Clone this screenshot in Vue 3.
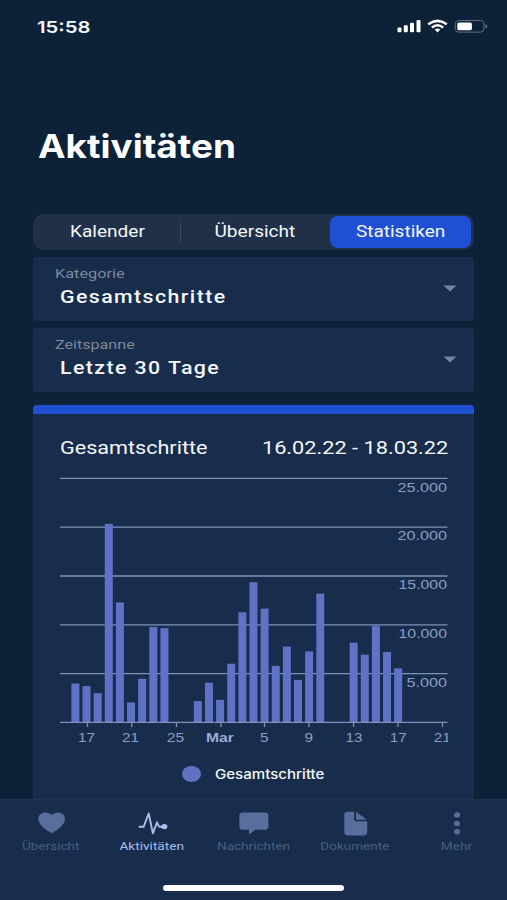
<script setup>
import { ref } from 'vue';

// Stretches a piece of text horizontally to the given width
const vFit = {
  mounted(el, binding) {
    el.style.transform = `scaleX(${binding.value / el.offsetWidth})`;
  }
};

const tabs = [
  { name: 'Kalender', width: 75 },
  { name: 'Übersicht', width: 81 },
  { name: 'Statistiken', width: 89 }
];
const activeTab = ref('Statistiken');

const filters = [
  { label: 'Kategorie', labelWidth: 70, value: 'Gesamtschritte', valueWidth: 167 },
  { label: 'Zeitspanne', labelWidth: 80, value: 'Letzte 30 Tage', valueWidth: 160 }
];

const steps = [
  3950, 3680, 2960, 20300, 12250, 2000, 4430, 9740, 9620, 0, 0,
  2150, 4020, 2270, 5970, 11250, 14320, 11620, 5750, 7730, 4320, 7230, 13150,
  0, 0, 8120, 6900, 9850, 7180, 5500
];

const gridLines = [
  { y: 1.3, text: '25.000', x: 337.5, width: 49.5 },
  { y: 50.2, text: '20.000', x: 337.5, width: 49.5 },
  { y: 99, text: '15.000', x: 338.5, width: 48.5 },
  { y: 147.8, text: '10.000', x: 338.5, width: 48.5 },
  { y: 196.6, text: '5.000', x: 346.5, width: 40.5 }
];

const days = [
  { text: '17', x: 26.5, width: 17 },
  { text: '21', x: 70.5, width: 17 },
  { text: '25', x: 115.5, width: 17.5 },
  { text: 'Mar', x: 160, width: 28, bold: true },
  { text: '5', x: 204.3, width: 8.5 },
  { text: '9', x: 248.8, width: 8.5 },
  { text: '13', x: 294, width: 17 },
  { text: '17', x: 338.2, width: 17 },
  { text: '21', x: 382.3, width: 17 }
];

const ticks = [27.5, 71.8, 116.5, 161, 204.5, 249, 293.5, 338, 382.5];

const barHeight = (value) => value * 0.00976;

const navItems = [
  { name: 'Übersicht', icon: 'heart', width: 58 },
  { name: 'Aktivitäten', icon: 'pulse', width: 64 },
  { name: 'Nachrichten', icon: 'chat', width: 73 },
  { name: 'Dokumente', icon: 'file', width: 69.5 },
  { name: 'Mehr', icon: 'more', width: 31.5 }
];
const activeNav = ref('Aktivitäten');
</script>

<template>
  <div class="app">
    <header class="status">
      <span class="time" v-fit="54">15:58</span>
      <svg class="status-icons" width="92" height="16" viewBox="0 0 92 16">
        <g fill="#fff">
          <rect x="1.5" y="9.5" width="4" height="4.7" rx="1" />
          <rect x="7.8" y="7.3" width="4" height="6.9" rx="1" />
          <rect x="14" y="4.7" width="4" height="9.5" rx="1" />
          <rect x="20.5" y="2" width="4" height="12.2" rx="1" />
        </g>
        <g fill="none" stroke="#fff" stroke-width="2.5">
          <path d="M32.2 6.2 Q41.5 -.5 50.8 6.2" />
          <path d="M35.9 9.5 Q41.5 4.9 47.1 9.5" />
        </g>
        <path d="M38.7 11.6 Q41.5 9.6 44.3 11.6 L41.5 14.4 Z" fill="#fff" />
        <rect x="59.3" y="2.5" width="28.7" height="11.6" rx="3.5" fill="none" stroke="#5f6f84" />
        <rect x="61.3" y="4.4" width="14.6" height="7.8" rx="1.6" fill="#fff" />
        <path d="M89.5 6 Q93 8.2 89.5 10.4 Z" fill="#6b7a8e" />
      </svg>
    </header>

    <main>
      <h1><span v-fit="198">Aktivitäten</span></h1>

      <div class="tabs">
        <button
          v-for="tab in tabs"
          :key="tab.name"
          :class="{ active: tab.name === activeTab }"
          @click="activeTab = tab.name"
        >
          <span v-fit="tab.width">{{ tab.name }}</span>
        </button>
      </div>

      <div v-for="filter in filters" :key="filter.label" class="filter">
        <div class="filter-text">
          <span class="label" v-fit="filter.labelWidth">{{ filter.label }}</span>
          <span class="value" v-fit="filter.valueWidth">{{ filter.value }}</span>
        </div>
        <svg width="14" height="7" viewBox="0 0 14 7">
          <path d="M.5 .5 H13.5 L7 6.5 Z" fill="#7385a0" />
        </svg>
      </div>

      <section class="card">
        <div class="card-head">
          <span v-fit="147.5">Gesamtschritte</span>
          <span class="range" v-fit="186">16.02.22 - 18.03.22</span>
        </div>

        <svg class="chart" width="388" height="274" viewBox="0 0 388 274">
          <line
            v-for="line in gridLines"
            :key="line.y"
            class="grid"
            x1="0"
            x2="387.5"
            :y1="line.y"
            :y2="line.y"
          />
          <template v-for="(value, i) in steps" :key="i">
            <rect
              v-if="value"
              class="bar"
              :x="11.4 + i * 11.13"
              :y="245 - barHeight(value)"
              width="8"
              :height="barHeight(value)"
            />
          </template>
          <line class="grid" x1="0" x2="387.5" y1="245.3" y2="245.3" />
          <line v-for="x in ticks" :key="x" class="grid" :x1="x" :x2="x" y1="245" y2="250" />
          <text
            v-for="line in gridLines"
            :key="line.text"
            :x="line.x"
            :y="line.y + 13.2"
            :textLength="line.width"
            lengthAdjust="spacingAndGlyphs"
          >{{ line.text }}</text>
          <text
            v-for="day in days"
            :key="day.x"
            :class="{ month: day.bold }"
            :x="day.x - day.width / 2"
            y="264.8"
            :textLength="day.width"
            lengthAdjust="spacingAndGlyphs"
          >{{ day.text }}</text>
        </svg>

        <div class="legend">
          <i></i>
          <span v-fit="109">Gesamtschritte</span>
        </div>
      </section>
    </main>

    <footer>
      <nav>
        <a v-for="item in navItems" :key="item.name" :class="{ active: item.name === activeNav }">
          <svg width="32" height="28" viewBox="0 0 32 28" fill="currentColor">
            <path
              v-if="item.icon === 'heart'"
              d="M16.7 25.2 C12 22.3 3.4 17.5 3.4 11 C3.4 4.2 12.3 2.6 16.7 7.1 C21.1 2.6 30 4.2 30 11 C30 17.5 21.4 22.3 16.7 25.2 Z"
            />
            <g v-else-if="item.icon === 'pulse'">
              <path
                d="M3.5 18.7 H7.7 L12.7 5.5 L16.9 25.3 L21 14.3 L23.2 18.7 H28"
                fill="none"
                stroke="currentColor"
                stroke-width="1.9"
                stroke-linejoin="round"
                stroke-linecap="round"
              />
              <ellipse cx="28.3" cy="18.6" rx="3.1" ry="2.6" />
            </g>
            <path
              v-else-if="item.icon === 'chat'"
              d="M6 4.6 H27.8 Q31.4 4.6 31.4 7.8 V18.4 Q31.4 21.8 27.8 21.8 H18.6 L12.7 26 Q12 26.3 12 25.5 V21.8 H6 Q2.4 21.8 2.4 18.4 V7.8 Q2.4 4.6 6 4.6 Z"
            />
            <g v-else-if="item.icon === 'file'">
              <path d="M8.3 3.8 H15.2 V11.3 Q15.2 13.3 17.3 13.3 H28.2 V24.1 Q28.2 27.4 24.9 27.4 H8.6 Q5.3 27.4 5.3 24.1 V7.1 Q5.3 3.8 8.3 3.8 Z" />
              <path d="M17.1 4.3 Q17.8 4.2 18.6 5 L26.6 10.8 Q27 11.3 27 11.8 H18.3 Q17.1 11.8 17.1 10.8 Z" />
            </g>
            <g v-else>
              <ellipse cx="17" cy="7" rx="3" ry="2.7" />
              <ellipse cx="17" cy="15.4" rx="3" ry="2.7" />
              <ellipse cx="17" cy="23.8" rx="3" ry="2.7" />
            </g>
          </svg>
          <span v-fit="item.width">{{ item.name }}</span>
        </a>
      </nav>
      <div class="home-bar"></div>
    </footer>
  </div>
</template>

<style>
body {
  margin: 0;
  background: #0d2139;
}
</style>

<style scoped>
.app {
  display: flex;
  flex-direction: column;
  width: 507px;
  height: 900px;
  overflow: hidden;
  background: #0d2139;
  color: #f4f7fc;
  font-family: Roboto, sans-serif;
}

.app span {
  display: inline-block;
  white-space: nowrap;
  transform-origin: left center;
}

.status {
  display: flex;
  justify-content: space-between;
  align-items: center;
  box-sizing: border-box;
  height: 54px;
  padding: 0 19px 0 37px;
}

.time {
  margin-bottom: 1px;
  font: 600 16.5px/20px Inter, sans-serif;
}

.status-icons {
  margin-bottom: 2px;
}

main {
  flex: 1;
  min-height: 0;
  overflow: hidden;
  padding: 0 33px;
}

h1 {
  margin: 72px 0 47px 5px;
  color: #fff;
  font: 700 33px/41px Inter, sans-serif;
}

.tabs {
  display: grid;
  grid-template-columns: 148px 148px 1fr;
  box-sizing: border-box;
  height: 36px;
  padding: 2px 3px 2px 0;
  margin-bottom: 6.5px;
  border-radius: 10px;
  background: #1f3048;
}

.tabs button {
  padding: 0 0 1px;
  border: 0;
  background: none;
  color: inherit;
  font: 400 16px/20px Roboto, sans-serif;
}

.tabs button:first-child {
  background: linear-gradient(#35455b, #35455b) right center / 1px 21px no-repeat;
}

.tabs button.active {
  margin-left: 1px;
  border-radius: 8px;
  background: #1f4fd3;
}

.filter {
  display: flex;
  justify-content: space-between;
  align-items: center;
  box-sizing: border-box;
  height: 64.5px;
  margin-bottom: 6.5px;
  padding: 0 17px 0 22px;
  border-radius: 4px;
  background: #172d4b;
}

.filter svg {
  margin-bottom: 1px;
}

.filter-text {
  display: flex;
  flex-direction: column;
  align-items: flex-start;
  padding-bottom: 4px;
}

.label {
  color: #7d8899;
  font-size: 13.5px;
  line-height: 20px;
}

.value {
  margin-left: 5px;
  font-size: 18px;
  font-weight: 500;
  line-height: 27px;
  letter-spacing: 1.2px;
}

.card {
  box-sizing: border-box;
  height: 420px;
  margin-top: 13px;
  padding: 20px 26px 0 27px;
  border-top: 9px solid #1f50d3;
  border-radius: 4px;
  background: #172d4b;
}

.card-head {
  display: flex;
  justify-content: space-between;
  height: 43px;
  font-size: 18px;
  line-height: 27px;
}

.app .range {
  transform-origin: right center;
}

.app .tabs span,
.app nav span {
  transform-origin: center;
}

.chart {
  display: block;
}

.grid {
  stroke: #7f92b7;
  stroke-width: 1.3;
}

.bar {
  fill: #5f72c6;
}

.chart text {
  fill: #8c9dc5;
  font: 13.5px "Liberation Sans", sans-serif;
}

.chart .month {
  fill: #9aabdc;
  font-weight: 700;
}

.legend {
  display: flex;
  align-items: center;
  gap: 14px;
  height: 20px;
  padding: 13px 0 0 122px;
  font: 500 13px/20px Inter, sans-serif;
}

.legend i {
  width: 19px;
  height: 16px;
  border-radius: 50%;
  background: #5f72c6;
}

footer {
  box-sizing: border-box;
  height: 101px;
  border-top: 1px solid #1d3455;
  background: #172d4b;
}

nav {
  display: grid;
  grid-template-columns: repeat(5, 1fr);
  height: 85px;
}

nav a {
  display: flex;
  flex-direction: column;
  align-items: center;
  padding-top: 8px;
  color: #586f9e;
}

nav span {
  margin-top: 2px;
  color: #485f83;
  font-size: 11.7px;
  line-height: 16px;
}

nav a.active,
nav a.active span {
  color: #a9bdee;
}

.home-bar {
  width: 181px;
  height: 6px;
  margin: 0 auto;
  border-radius: 3px;
  background: #fff;
}
</style>
